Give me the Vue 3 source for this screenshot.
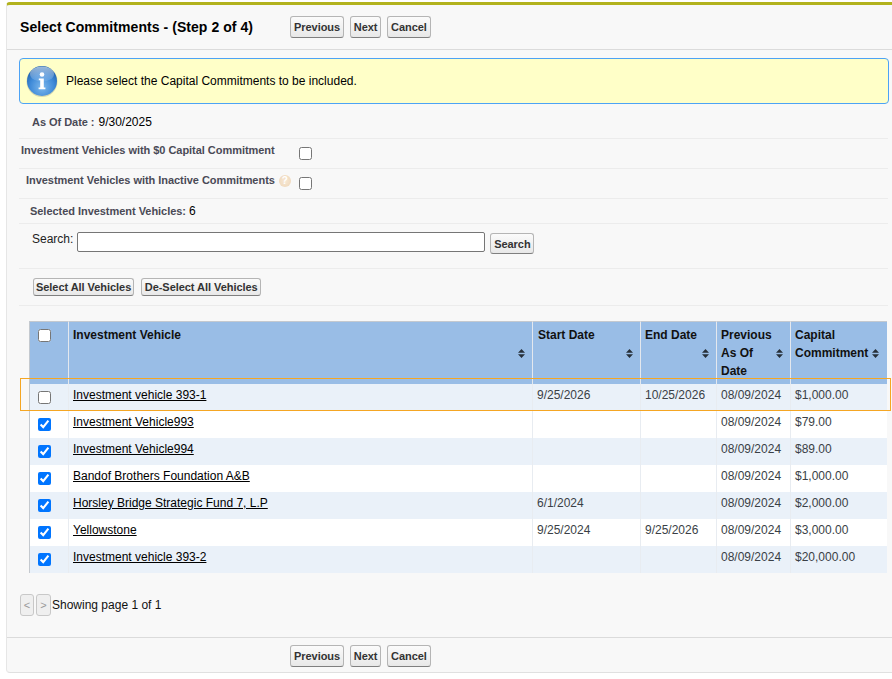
<script setup>
const columns = [
  { key: 'name', label: 'Investment Vehicle', cls: 'col-name' },
  { key: 'start', label: 'Start Date', cls: 'col-start' },
  { key: 'end', label: 'End Date', cls: 'col-end' },
  { key: 'prev', label: 'Previous As Of Date', cls: 'col-prev' },
  { key: 'cap', label: 'Capital Commitment', cls: 'col-cap' }
]
const rows = [
  { name: 'Investment vehicle 393-1', start: '9/25/2026', end: '10/25/2026', prev: '08/09/2024', cap: '$1,000.00', on: false },
  { name: 'Investment Vehicle993', start: '', end: '', prev: '08/09/2024', cap: '$79.00', on: true },
  { name: 'Investment Vehicle994', start: '', end: '', prev: '08/09/2024', cap: '$89.00', on: true },
  { name: 'Bandof Brothers Foundation A&B', start: '', end: '', prev: '08/09/2024', cap: '$1,000.00', on: true },
  { name: 'Horsley Bridge Strategic Fund 7, L.P', start: '6/1/2024', end: '', prev: '08/09/2024', cap: '$2,000.00', on: true },
  { name: 'Yellowstone', start: '9/25/2024', end: '9/25/2026', prev: '08/09/2024', cap: '$3,000.00', on: true },
  { name: 'Investment vehicle 393-2', start: '', end: '', prev: '08/09/2024', cap: '$20,000.00', on: true }
]
</script>

<template>
  <div class="page">
    <div class="panel">
      <header class="head">
        <h2 class="title">Select Commitments - (Step 2 of 4)</h2>
        <div class="actions">
          <button class="btn">Previous</button>
          <button class="btn btn-next">Next</button>
          <button class="btn">Cancel</button>
        </div>
      </header>

      <div class="body">
        <div class="info">
          <svg class="info-icon" width="32" height="32" viewBox="0 0 32 32">
            <defs>
              <radialGradient id="orb" cx="50%" cy="70%" r="62%">
                <stop offset="0%" stop-color="#7db8ec" />
                <stop offset="65%" stop-color="#3f8ad8" />
                <stop offset="100%" stop-color="#2568b4" />
              </radialGradient>
              <linearGradient id="gloss" x1="0" y1="0" x2="0" y2="1">
                <stop offset="0%" stop-color="#fff" stop-opacity=".55" />
                <stop offset="100%" stop-color="#fff" stop-opacity=".08" />
              </linearGradient>
            </defs>
            <circle cx="16" cy="16.5" r="15.5" fill="#8a8f80" opacity=".35" />
            <circle cx="16" cy="16" r="15" fill="url(#orb)" />
            <ellipse cx="16" cy="9" rx="12" ry="7.5" fill="url(#gloss)" />
            <circle cx="16" cy="9.5" r="2.3" fill="#fff" />
            <path d="M12.8 13.6h5v9h1.6v1.7h-6.8v-1.7h1.6v-7.3h-1.4z" fill="#fff" />
          </svg>
          <span>Please select the Capital Commitments to be included.</span>
        </div>

        <div class="line line-date">
          <span class="lbl">As Of Date :</span><span class="val">9/30/2025</span>
        </div>
        <div class="line line-zero">
          <span class="lbl lbl-zero">Investment Vehicles with $0 Capital Commitment</span>
          <input type="checkbox" class="chk" />
        </div>
        <div class="line line-inactive">
          <span class="lbl">Investment Vehicles with Inactive Commitments</span>
          <span class="help">?</span>
          <input type="checkbox" class="chk" />
        </div>
        <div class="line line-selected">
          <span class="lbl">Selected Investment Vehicles:</span><span class="val val-count">6</span>
        </div>
        <div class="line line-search">
          <label class="search-label">Search:</label>
          <input type="text" class="search-input" />
          <button class="btn btn-search">Search</button>
        </div>
        <div class="line line-bulk">
          <button class="btn btn-sm">Select All Vehicles</button>
          <button class="btn btn-sm">De-Select All Vehicles</button>
        </div>

        <div class="table-wrap">
          <table class="grid">
            <thead>
              <tr>
                <th class="col-check"><input type="checkbox" class="chk-cell" /></th>
                <th v-for="c in columns" :key="c.key" :class="c.cls">
                  <div class="th-in">
                    <span class="th-label">{{ c.label }}</span>
                    <svg class="sort" width="7" height="9" viewBox="0 0 7 9">
                      <path d="M3.5 0 7 3.7H0zM3.5 9 0 5.3h7z" fill="#27303a" />
                    </svg>
                  </div>
                </th>
              </tr>
            </thead>
            <tbody>
              <tr v-for="r in rows" :key="r.name">
                <td class="col-check"><input type="checkbox" class="chk-cell" :checked="r.on" /></td>
                <td><a class="link" href="#">{{ r.name }}</a></td>
                <td>{{ r.start }}</td>
                <td>{{ r.end }}</td>
                <td>{{ r.prev }}</td>
                <td>{{ r.cap }}</td>
              </tr>
            </tbody>
          </table>
          <div class="focus-ring"></div>
        </div>

        <div class="pager">
          <button class="page-btn">&lt;</button>
          <button class="page-btn page-btn-next">&gt;</button>
          <span class="page-text">Showing page 1 of 1</span>
        </div>
      </div>

      <footer class="foot">
        <button class="btn">Previous</button>
        <button class="btn btn-next">Next</button>
        <button class="btn">Cancel</button>
      </footer>
    </div>
  </div>
</template>

<style>
html, body { margin: 0; background: #fff; }
</style>

<style scoped>
.page {
  width: 892px;
  height: 679px;
  padding: 2px 0 0 6px;
  box-sizing: border-box;
  overflow: hidden;
  font-family: "Liberation Sans", Arial, sans-serif;
  font-size: 12px;
  color: #000;
}
.panel {
  width: 886px;
  height: 671px;
  box-sizing: border-box;
  background: #f8f8f8;
  border-top: 3px solid #b2b21e;
  border-left: 1px solid #e6e6e6;
  border-bottom: 1px solid #e0e0e0;
  border-radius: 4px 0 0 4px;
  display: flex;
  flex-direction: column;
}
.head {
  height: 45px;
  box-sizing: border-box;
  display: flex;
  align-items: center;
  border-bottom: 1px solid #dbdbdb;
  padding: 0 0 0 13px;
}
.title {
  margin: 0;
  width: 270px;
  font-size: 14px;
  font-weight: bold;
  line-height: 18px;
  letter-spacing: 0.06px;
}
.actions, .foot { display: flex; gap: 6px; }
.btn {
  height: 22px;
  padding: 0 3px;
  box-sizing: border-box;
  font-family: inherit;
  font-size: 11px;
  font-weight: bold;
  letter-spacing: -0.05px;
  color: #333;
  background: linear-gradient(#fbfbfb, #e8e8e8);
  border: 1px solid #b5b5b5;
  border-bottom-color: #7f7f7f;
  border-radius: 3px;
  white-space: nowrap;
}
.btn-next { width: 31px; padding: 0; }
.btn-sm { height: 18px; padding: 0 2px; }
.btn-sm + .btn-sm { margin-left: 1px; padding: 0 2.5px; }
.body { flex: 1; padding: 8px 0 0 12px; }
.info {
  width: 870px;
  height: 46px;
  box-sizing: border-box;
  display: flex;
  align-items: center;
  gap: 8px;
  padding: 0 0 0 6px;
  background: #ffffc8;
  border: 1px solid #4da3f5;
  border-radius: 4px;
}
.info-icon { flex: none; }
.line {
  width: 869px;
  box-sizing: border-box;
  display: flex;
  align-items: center;
  border-bottom: 1px solid #ececec;
}
.lbl { font-size: 11px; font-weight: bold; color: #4a4a56; letter-spacing: -0.04px; }
.val { margin-left: 4px; font-size: 12px; }
.val-count { margin-left: 3px; }
.line-date { height: 35px; padding: 2px 0 0 13px; }
.line-zero { height: 30px; padding-left: 2px; }
.lbl-zero { width: 278px; margin-top: -8px; }
.line-inactive { height: 30px; padding-left: 7px; }
.line-inactive .lbl { margin-top: -8px; }
.line-selected { height: 25px; padding-left: 11px; }
.chk { width: 13px; height: 13px; margin: -1px 0 0; }
.help {
  width: 12px;
  height: 12px;
  margin: -6px 8px 0 4px;
  border-radius: 50%;
  background: radial-gradient(#f7e8d4, #eed6b8);
  color: #fff;
  font-size: 10px;
  font-weight: bold;
  line-height: 12px;
  text-align: center;
}
.line-search { height: 45px; padding: 0 0 8px 13px; }
.search-label { margin: -6px 4px 0 0; color: #222; }
.search-input {
  width: 408px;
  height: 20px;
  box-sizing: border-box;
  margin: 0 5px 0 0;
  padding: 0 3px;
  background: #fff;
  border: 1px solid #767676;
  border-radius: 2px;
}
.btn-search { width: 44px; height: 21px; margin-top: 3px; padding: 0; }
.line-bulk { height: 37px; padding-left: 14px; gap: 6px; }
.table-wrap { position: relative; width: 858px; margin: 15px 0 0 10px; }
.grid {
  width: 858px;
  table-layout: fixed;
  border-collapse: separate;
  border-spacing: 0;
}
.grid th {
  height: 63px;
  box-sizing: border-box;
  padding: 4px 4px 0;
  vertical-align: top;
  text-align: left;
  font-size: 12px;
  line-height: 18px;
  font-weight: bold;
  color: #111;
  background: #99bde6;
  border-top: 1px solid #c4c9cf;
  border-left: 1px solid #e4e8ee;
}
.grid th:first-child { border-left: 1px solid #c4c9cf; }
.th-in { display: flex; align-items: flex-start; height: 54px; position: relative; }
.th-label { flex: 1; }
.sort { position: absolute; right: 3px; top: 23px; }
.grid th.col-check { width: 39px; }
.grid th.col-name { width: 464px; }
.grid th.col-start { width: 108px; padding-left: 5px; }
.grid th.col-end { width: 76px; }
.grid th.col-prev { width: 74px; }
.col-prev .th-label { width: 52px; flex: none; }
.col-cap .th-label { width: 80px; flex: none; }
.col-cap .sort { right: 4px; }
.grid td {
  height: 27px;
  box-sizing: border-box;
  padding: 4px 4px 0;
  vertical-align: top;
  line-height: 14px;
  color: #3a3f46;
  background: #fff;
  border-left: 1px solid #e8ecf1;
}
.grid td:nth-child(2) { color: #000; }
.grid tbody tr:nth-child(odd) td { background: #eaf1f9; }
.grid td:first-child { border-left: 1px solid #c4c9cf; }
.grid th.col-check, .grid td.col-check { padding: 0 0 0 8px; text-align: left; }
.chk-cell { display: block; width: 13px; height: 13px; margin: 7px 0 0; }
.link { color: #000; text-decoration: underline; }
.focus-ring {
  position: absolute;
  left: -9px;
  top: 57px;
  width: 871px;
  height: 33px;
  box-sizing: border-box;
  border: 1px solid #f5a623;
  z-index: 2;
  pointer-events: none;
}
.pager { display: flex; align-items: center; margin: 21px 0 0 1px; }
.page-btn {
  width: 14px;
  height: 22px;
  margin-right: 2px;
  padding: 0;
  font-family: inherit;
  font-size: 11px;
  color: #999;
  background: #efefef;
  border: 1px solid #c8c8c8;
  border-radius: 3px;
}
.page-btn-next { width: 15px; margin-right: 1px; }
.page-text { font-size: 12px; color: #111; }
.foot {
  height: 35px;
  box-sizing: border-box;
  padding: 7px 0 0 283px;
  border-top: 1px solid #dbdbdb;
}
</style>
